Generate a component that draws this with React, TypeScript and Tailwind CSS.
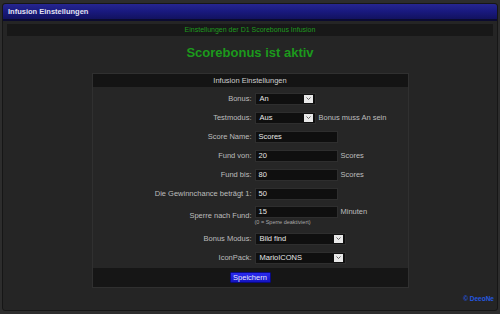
import React from "react";

const font = { fontFamily: '"Liberation Sans", Arial, sans-serif' };

function SelectBox({ value, width }: { value: string; width: string }) {
  return (
    <div className={`${width} flex h-[12px] items-center justify-between border border-[#2e2e2e] bg-[#0f0f0f] pl-[4px] pr-[2px]`}>
      <span className="text-[7.5px] leading-none text-[#e6e6e6]">{value}</span>
      <span className="flex h-[8px] w-[9px] items-center justify-center bg-[#e8e8e8]">
        <svg width="5" height="3" viewBox="0 0 5 3">
          <path d="M0.5 0.5 L2.5 2.5 L4.5 0.5" stroke="#555" strokeWidth="0.9" fill="none" />
        </svg>
      </span>
    </div>
  );
}

function TextBox({ value }: { value: string }) {
  return (
    <div className="flex h-[12px] w-[83px] items-center border border-[#2e2e2e] bg-[#0f0f0f] pl-[3px]">
      <span className="text-[7.5px] leading-none text-[#e6e6e6]">{value}</span>
    </div>
  );
}

function Row({ label, children, after }: { label: string; children: React.ReactNode; after?: string }) {
  return (
    <div className="grid h-[19px] grid-cols-[159px_1fr] items-center gap-[2px]">
      <div className="text-right text-[7.5px] text-[#bdbdbd]">{label}</div>
      <div className="flex items-center gap-[3px] pl-[1px]">
        {children}
        {after && <span className="text-[7.5px] text-[#bdbdbd]">{after}</span>}
      </div>
    </div>
  );
}

export default function App() {
  return (
    <div className="h-[314px] w-[500px] bg-[#2d2d2d] px-[2px] pt-[3px] pb-[3px]" style={font}>
      <div className="flex h-full flex-col rounded-[3px] border border-[#161616] bg-[#252525]">
        <div className="flex h-[17px] items-center rounded-t-[3px] border-b-2 border-[#0b0b30] bg-gradient-to-b from-[#262690] via-[#19197e] to-[#12125f] px-[5px]">
          <span className="text-[7.5px] font-semibold text-[#e2e2f2]">Infusion Einstellungen</span>
        </div>

        <div className="mx-[4px] mt-[3px] flex h-[12px] items-center justify-center bg-[#181818]">
          <span className="text-[7px] text-[#1f9a1f]">Einstellungen der D1 Scorebonus Infusion</span>
        </div>

        <div className="mt-[10px] text-center text-[13px] font-bold leading-[14px] text-[#1c9a1c]">
          Scorebonus ist aktiv
        </div>

        <div className="mx-auto mt-[13px] w-[317px] border border-[#303030] bg-[#262626]">
          <div className="flex h-[13px] items-center justify-center bg-[#141414]">
            <span className="text-[7.5px] text-[#cfcfcf]">Infusion Einstellungen</span>
          </div>
          <div className="pt-[2px] pb-[1px]">
            <Row label="Bonus:">
              <SelectBox value="An" width="w-[61px]" />
            </Row>
            <Row label="Testmodus:" after="Bonus muss An sein">
              <SelectBox value="Aus" width="w-[61px]" />
            </Row>
            <Row label="Score Name:">
              <TextBox value="Scores" />
            </Row>
            <Row label="Fund von:" after="Scores">
              <TextBox value="20" />
            </Row>
            <Row label="Fund bis:" after="Scores">
              <TextBox value="80" />
            </Row>
            <Row label="Die Gewinnchance beträgt 1:">
              <TextBox value="50" />
            </Row>
            <div className="grid h-[26px] grid-cols-[159px_1fr] items-center gap-[2px]">
              <div className="text-right text-[7.5px] text-[#bdbdbd]">Sperre nach Fund:</div>
              <div className="flex flex-col pl-[1px]">
                <div className="flex items-center gap-[3px]">
                  <TextBox value="15" />
                  <span className="text-[7.5px] text-[#bdbdbd]">Minuten</span>
                </div>
                <span className="text-[5.5px] leading-[8px] text-[#a8a8a8]">(0 = Sperre deaktiviert)</span>
              </div>
            </div>
            <Row label="Bonus Modus:">
              <SelectBox value="Bild find" width="w-[91px]" />
            </Row>
            <Row label="IconPack:">
              <SelectBox value="MarioICONS" width="w-[91px]" />
            </Row>
          </div>
          <div className="flex h-[19px] items-center justify-center bg-[#161616]">
            <button className="flex h-[11px] w-[41px] items-center justify-center rounded-[1px] border border-[#0a0a80] bg-gradient-to-b from-[#2a2af0] to-[#1414c0] text-[7.5px] text-[#e8e8ff]">
              Speichern
            </button>
          </div>
        </div>

        <div className="mt-auto flex justify-end pr-[3px] pb-[6px]">
          <span className="text-[6.5px] font-bold text-[#2458e0]">© DeeoNe</span>
        </div>
      </div>
    </div>
  );
}
